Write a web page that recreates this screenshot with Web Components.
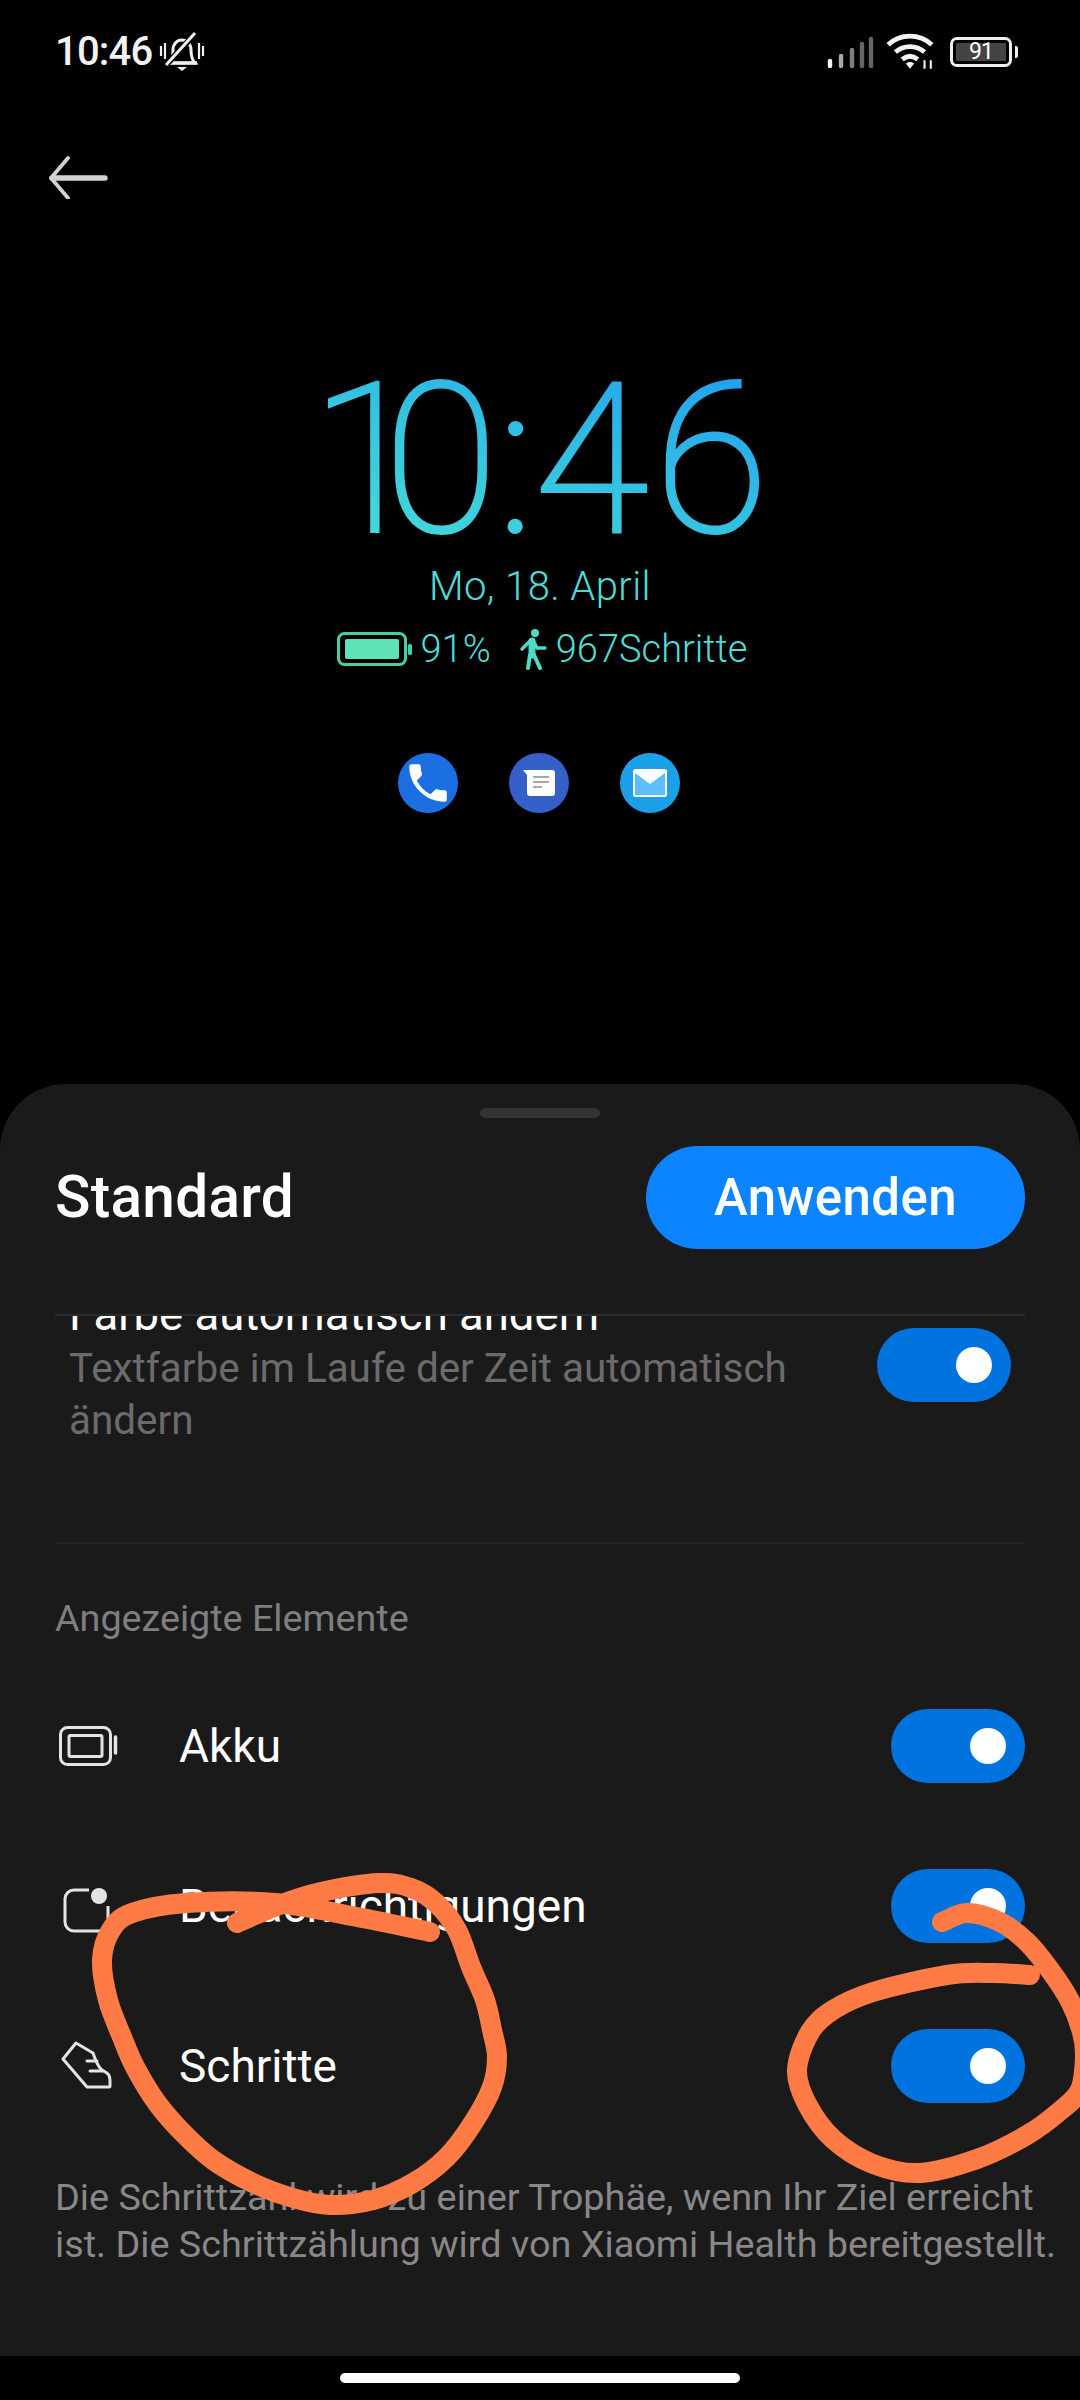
<!DOCTYPE html>
<html lang="de">
<head>
<meta charset="utf-8">
<title>Standard</title>
<style>
  html, body { margin: 0; padding: 0; background: #000; }
  body { font-family: Roboto, "Noto Sans", sans-serif; }
  #page { position: relative; width: 1080px; height: 2400px; overflow: hidden; display: flex; flex-direction: column; }
</style>
</head>
<body>
<div id="page">
  <status-bar></status-bar>
  <back-bar></back-bar>
  <clock-preview></clock-preview>
  <bottom-sheet>
    <span slot="title">Standard</span>
    <span slot="action">Anwenden</span>
    <setting-note title="Farbe automatisch ändern">Textfarbe im Laufe der Zeit automatisch ändern</setting-note>
    <section-label>Angezeigte Elemente</section-label>
    <setting-row>
      <svg slot="icon" width="64" height="44" viewBox="0 0 64 44" fill="none" stroke="#e4e4e4" stroke-width="3">
        <rect x="5.5" y="3.5" width="50" height="37" rx="7"/>
        <rect x="14" y="11.5" width="33" height="21" rx="1.5"/>
        <path d="M60.5 13v16" stroke-width="3.5" stroke-linecap="round"/>
      </svg>
      Akku
    </setting-row>
    <setting-row>
      <svg slot="icon" width="64" height="60" viewBox="0 -10 64 60" fill="none" stroke="#e4e4e4" stroke-width="3">
        <path d="M34 4H19a9 9 0 0 0-9 9v23a9 9 0 0 0 9 9h25a9 9 0 0 0 9-9V20"/>
        <circle cx="44" cy="10" r="8" fill="#e4e4e4" stroke="none"/>
      </svg>
      Benachrichtigungen
    </setting-row>
    <setting-row>
      <svg slot="icon" width="64" height="52" viewBox="0 0 64 52" fill="none" stroke="#e4e4e4" stroke-width="3" stroke-linejoin="round" stroke-linecap="round">
        <path d="M8 19 21 3l17 10c2 6 5 14 9 17 6 3 8 5 8 10v6a1 1 0 0 1-1 1H32z"/>
        <path d="M32 21h10M35 31h13"/>
      </svg>
      Schritte
    </setting-row>
    <foot-note>Die Schrittzahl wird zu einer Trophäe, wenn Ihr Ziel erreicht ist. Die Schrittzählung wird von Xiaomi Health bereitgestellt.</foot-note>
  </bottom-sheet>
  <home-bar></home-bar>
  <scribble-layer></scribble-layer>
</div>

<script>
class StatusBar extends HTMLElement {
    constructor() {
        super();
        this.attachShadow({ mode: 'open' });
        this.shadowRoot.innerHTML = `
            <style>
                :host { display: flex; align-items: center; justify-content: space-between; height: 104px; box-sizing: border-box; padding: 0 62px 0 55px; color: #f2f2f2; }
                .left, .right { display: flex; align-items: center; }
                .time { font: 500 40px/1 Roboto, sans-serif; letter-spacing: -.8px; }
                .left svg { margin-left: 6px; }
                .right svg { display: block; }
                .wifi { margin-left: 12px; }
                .battery { display: flex; align-items: center; justify-content: center; margin-left: 14px; width: 62px; height: 30px; box-sizing: border-box; border: 3px solid #f0f0f0; border-radius: 7px; padding: 3px; }
                .battery span { flex: 1; height: 100%; background: #444; border-radius: 1px; font: 400 23px/18px Roboto, sans-serif; text-align: center; letter-spacing: -1px; color: #fff; }
                .tip { width: 3px; height: 12px; margin-left: 3px; background: #eee; border-radius: 0 2px 2px 0; }
            </style>
            <div class="left">
                <span class="time">10:46</span>
                <svg width="46" height="42" viewBox="0 0 46 40" fill="none" stroke="#f0f0f0" stroke-width="3">
                    <path d="M11 31c3-3 3-7 3-13 0-6 4-10 9-10s9 4 9 10c0 6 1 10 4 13z" stroke-width="3"/>
                    <path d="M8 31h30" stroke-width="3.4"/>
                    <path d="M18 35h10l-5 4z" fill="#f0f0f0" stroke="none"/>
                    <path d="M36 2 7 33" stroke="#000" stroke-width="6"/>
                    <path d="M36 1 7 33" stroke-width="3"/>
                    <path d="M2 14v10M6 11v16M40 11v16M44 14v10" stroke-width="2.2"/>
                </svg>
            </div>
            <div class="right">
                <svg width="48" height="32" viewBox="0 0 48 32" fill="none" stroke-width="4.4" stroke-linecap="round">
                    <path d="M4 30v-5" stroke="#f4f4f4"/>
                    <path d="M15 30V20" stroke="#a8a8a8"/>
                    <path d="M26 30V14" stroke="#808080"/>
                    <path d="M36 30V8" stroke="#666"/>
                    <path d="M45 30V3" stroke="#666"/>
                </svg>
                <svg class="wifi" width="50" height="38" viewBox="0 0 48 36" fill="none" stroke="#f4f4f4" stroke-width="4.6">
                    <path d="M2 11c12-11 30-11 42 0"/>
                    <path d="M9 18c8-7 20-7 28 0"/>
                    <path d="M15.5 25c5-4 10-4 15 0"/>
                    <path d="M23 34l-4-5c2-2 6-2 8 0z" fill="#f4f4f4" stroke="none"/>
                    <path d="M37 26v8M43 26v8" stroke-width="2"/>
                </svg>
                <div class="battery"><span>91</span></div>
                <div class="tip"></div>
            </div>
        `;
    }
}

class BackBar extends HTMLElement {
    constructor() {
        super();
        this.attachShadow({ mode: 'open' });
        this.shadowRoot.innerHTML = `
            <style>
                :host { display: block; height: 120px; padding: 51px 0 0 47px; box-sizing: border-box; }
                svg { display: block; }
            </style>
            <svg width="62" height="44" viewBox="0 0 62 44" fill="none" stroke="#d2d2d2" stroke-linecap="round" stroke-linejoin="round">
                <path d="M5 23h53" stroke-width="5.4"/>
                <path d="M21 3 4 23l17 20" stroke-width="3.8"/>
            </svg>
        `;
    }
}

class ClockPreview extends HTMLElement {
    constructor() {
        super();
        this.attachShadow({ mode: 'open' });
        this.shadowRoot.innerHTML = `
            <style>
                :host { display: flex; flex-direction: column; align-items: center; height: 860px; font-family: Roboto, sans-serif; color: #4fdcd6; }
                .clock {
                    margin-top: 142px; margin-left: -1px; height: 190px; font: 100 207px/190px Roboto, sans-serif;
                    -webkit-text-stroke: 4px transparent;
                    background: linear-gradient(20deg, #49e0d6 0%, #33bfe2 55%, #1f9cf2 100%);
                    -webkit-background-clip: text; background-clip: text; color: transparent;
                }
                .clock .one { letter-spacing: -40px; }
                .clock .four { letter-spacing: 7px; }
                .date { margin-top: 7px; font: 300 40px/48px Roboto, sans-serif; letter-spacing: .4px; }
                .stats { display: flex; align-items: center; margin-top: 13px; height: 50px; font: 300 38px/50px Roboto, sans-serif; margin-left: 4px; }
                .stats .walk { margin: 0 9px 0 28px; }
                .stats .batt { margin-right: 9px; }
                .apps { display: flex; gap: 51px; margin-top: 79px; margin-right: 2px; }
                .app { width: 60px; height: 60px; border-radius: 50%; display: flex; align-items: center; justify-content: center; }
            </style>
            <div class="clock"><span class="one">1</span>0:<span class="four">4</span>6</div>
            <div class="date">Mo, 18. April</div>
            <div class="stats">
                <svg class="batt" width="75" height="34" viewBox="0 0 75 34" fill="none">
                    <rect x="1.5" y="1.5" width="67" height="31" rx="6" stroke="#45cfa8" stroke-width="3"/>
                    <rect x="8" y="7" width="54" height="20" rx="2" fill="#5fe2b8"/>
                    <rect x="71" y="12" width="4" height="11" rx="1.5" fill="#45cfa8"/>
                </svg>
                <span>91%</span>
                <svg class="walk" width="28" height="42" viewBox="0 0 28 42" fill="none" stroke="#4fdcc6" stroke-linecap="round" stroke-linejoin="round">
                    <circle cx="16" cy="5" r="4" fill="#4fdcc6" stroke="none"/>
                    <path d="M13 13v14" stroke-width="7"/>
                    <path d="M12 12 3 21" stroke-width="3.4"/>
                    <path d="M15 14l3 6h8" stroke-width="3.4"/>
                    <path d="M11 27 9 40M15 27l6 13" stroke-width="4"/>
                </svg>
                <span>967Schritte</span>
            </div>
            <div class="apps">
                <div class="app" style="background:#1b6fe2">
                    <svg width="50" height="50" viewBox="0 0 24 24"><path fill="#fff" d="M6.62 10.79c1.44 2.83 3.76 5.14 6.59 6.59l2.2-2.2c.27-.27.67-.36 1.02-.24 1.12.37 2.33.57 3.57.57.55 0 1 .45 1 1V20c0 .55-.45 1-1 1-9.39 0-17-7.61-17-17 0-.55.45-1 1-1h3.5c.55 0 1 .45 1 1 0 1.25.2 2.45.57 3.57.11.35.03.74-.25 1.02l-2.2 2.2z"/></svg>
                </div>
                <div class="app" style="background:#355fc9">
                    <svg width="34" height="28" viewBox="0 0 34 28">
                        <path fill="#fff" d="M1 1h29a3 3 0 0 1 3 3v20a3 3 0 0 1-3 3H8a3 3 0 0 1-3-3V6z"/>
                        <path stroke="#a8a8a8" stroke-width="2" d="M11 8h16M11 13h16M11 18h9"/>
                    </svg>
                </div>
                <div class="app" style="background:#1b9fe6">
                    <svg width="34" height="28" viewBox="0 0 34 28">
                        <rect x="1" y="1" width="32" height="26" rx="1.5" fill="#5dbdfd" stroke="#fff" stroke-width="2"/>
                        <path fill="#fff" d="M2 2h30v2L17 15 2 4z"/>
                    </svg>
                </div>
            </div>
        `;
    }
}

class BottomSheet extends HTMLElement {
    constructor() {
        super();
        this.attachShadow({ mode: 'open' });
        this.shadowRoot.innerHTML = `
            <style>
                :host { display: flex; flex-direction: column; height: 1272px; background: #1a1a1a; border-radius: 66px 66px 0 0; color: #fff; font-family: Roboto, sans-serif; }
                .handle { width: 120px; height: 10px; margin: 24px auto 0; border-radius: 5px; background: #333; }
                header { display: flex; align-items: center; justify-content: space-between; height: 103px; margin: 28px 55px 0; }
                .title { font: 500 58.5px/1 Roboto, sans-serif; letter-spacing: .3px; }
                .action { width: 379px; height: 103px; border-radius: 52px; background: #0d84ff; display: flex; align-items: center; justify-content: center; font: 500 51px/1 Roboto, sans-serif; letter-spacing: .4px; }
                .line { height: 2px; margin: 65px 55px 0; background: #2c2c2c; }
                .scroll { flex: 1; overflow: hidden; }
            </style>
            <div class="handle"></div>
            <header>
                <div class="title"><slot name="title"></slot></div>
                <div class="action"><slot name="action"></slot></div>
            </header>
            <div class="line"></div>
            <div class="scroll"><slot></slot></div>
        `;
    }
}

class ToggleSwitch extends HTMLElement {
    constructor() {
        super();
        this.attachShadow({ mode: 'open' });
        this.shadowRoot.innerHTML = `
            <style>
                :host { display: flex; align-items: center; justify-content: flex-end; flex: none; width: 134px; height: 74px; box-sizing: border-box; padding-right: 19px; border-radius: 37px; background: #0073de; }
                i { display: block; width: 36px; height: 36px; border-radius: 50%; background: #fff; }
            </style>
            <i></i>
        `;
    }
}

class SettingNote extends HTMLElement {
    constructor() {
        super();
        this.attachShadow({ mode: 'open' });
        this.shadowRoot.innerHTML = `
            <style>
                :host { display: flex; justify-content: space-between; height: 228px; margin: 0 55px; padding: 0 14px; box-sizing: border-box; border-bottom: 2px solid #262626; }
                .title { margin-top: -31px; font: 400 45.5px/60px Roboto, sans-serif; color: #fff; }
                .sub { width: 760px; font: 400 40.4px/52px Roboto, sans-serif; color: #6b6b6b; margin-top: -2px; }
                x-toggle { margin-top: 12px; }
            </style>
            <div>
                <div class="title"></div>
                <div class="sub"><slot></slot></div>
            </div>
            <x-toggle></x-toggle>
        `;
        this.shadowRoot.querySelector('.title').textContent = this.getAttribute('title');
    }
}

class SectionLabel extends HTMLElement {
    constructor() {
        super();
        this.attachShadow({ mode: 'open' });
        this.shadowRoot.innerHTML = `
            <style>
                :host { display: block; padding: 50px 55px 0; height: 122px; box-sizing: border-box; font: 400 37.7px/48px Roboto, sans-serif; color: #7f7f7f; }
            </style>
            <slot></slot>
        `;
    }
}

class SettingRow extends HTMLElement {
    constructor() {
        super();
        this.attachShadow({ mode: 'open' });
        this.shadowRoot.innerHTML = `
            <style>
                :host { display: flex; align-items: center; height: 160px; padding: 0 55px; font: 400 46px/1 Roboto, sans-serif; color: #fff; }
                .icon { width: 124px; display: flex; align-items: center; }
                .label { flex: 1; }
            </style>
            <div class="icon"><slot name="icon"></slot></div>
            <div class="label"><slot></slot></div>
            <x-toggle></x-toggle>
        `;
    }
}

class FootNote extends HTMLElement {
    constructor() {
        super();
        this.attachShadow({ mode: 'open' });
        this.shadowRoot.innerHTML = `
            <style>
                :host { display: block; padding: 28px 20px 0 55px; font: 400 37.8px/47px Roboto, sans-serif; color: #888; }
            </style>
            <slot></slot>
        `;
    }
}

class HomeBar extends HTMLElement {
    constructor() {
        super();
        this.attachShadow({ mode: 'open' });
        this.shadowRoot.innerHTML = `
            <style>
                :host { display: block; height: 44px; box-sizing: border-box; padding-top: 17px; }
                div { width: 400px; height: 10px; margin: 0 auto; border-radius: 5px; background: #fff; }
            </style>
            <div></div>
        `;
    }
}

// los trazos naranjas van encima de todo, por eso absolute
class ScribbleLayer extends HTMLElement {
    constructor() {
        super();
        this.attachShadow({ mode: 'open' });
        const left = [[237,1923],[279,1905],[321,1892],[379,1883],[411,1888],[436,1903],[457,1930],[471,1967],[485,2000],[492,2030],[497,2057],[492,2087],[473,2123],[447,2157],[413,2183],[373,2200],[330,2205],[293,2198],[253,2183],[213,2160],[183,2133],[157,2103],[135,2067],[122,2037],[108,2000],[102,1960],[111,1930],[132,1913],[186,1903],[275,1903],[357,1917],[430,1932]];
        const right = [[942,1922],[967,1913],[1000,1922],[1027,1942],[1050,1970],[1070,2001],[1082,2032],[1085,2056],[1080,2090],[1060,2111],[1027,2135],[977,2159],[920,2173],[873,2164],[833,2139],[807,2104],[797,2070],[810,2032],[833,2010],[873,1992],[947,1975],[993,1973],[1030,1975]];
        this.shadowRoot.innerHTML = `
            <style>
                :host { position: absolute; left: 0; top: 0; width: 1080px; height: 2400px; pointer-events: none; }
                svg { display: block; }
            </style>
            <svg width="1080" height="2400" viewBox="0 0 1080 2400" fill="none" stroke="#ff7b45" stroke-width="20" stroke-linecap="round" stroke-linejoin="round">
                <path d="${this._smooth(left)}"/>
                <path d="${this._smooth(right)}"/>
            </svg>
        `;
    }

    _smooth(pts) {
        let d = `M${pts[0][0]} ${pts[0][1]}`;
        for (let i = 0; i < pts.length - 1; i++) {
            const p0 = pts[i - 1] || pts[i];
            const p1 = pts[i];
            const p2 = pts[i + 1];
            const p3 = pts[i + 2] || p2;
            const c1x = p1[0] + (p2[0] - p0[0]) / 6;
            const c1y = p1[1] + (p2[1] - p0[1]) / 6;
            const c2x = p2[0] - (p3[0] - p1[0]) / 6;
            const c2y = p2[1] - (p3[1] - p1[1]) / 6;
            d += `C${c1x} ${c1y} ${c2x} ${c2y} ${p2[0]} ${p2[1]}`;
        }
        return d;
    }
}

customElements.define('x-toggle', ToggleSwitch);
customElements.define('status-bar', StatusBar);
customElements.define('back-bar', BackBar);
customElements.define('clock-preview', ClockPreview);
customElements.define('bottom-sheet', BottomSheet);
customElements.define('setting-note', SettingNote);
customElements.define('section-label', SectionLabel);
customElements.define('setting-row', SettingRow);
customElements.define('foot-note', FootNote);
customElements.define('home-bar', HomeBar);
customElements.define('scribble-layer', ScribbleLayer);
</script>
</body>
</html>
